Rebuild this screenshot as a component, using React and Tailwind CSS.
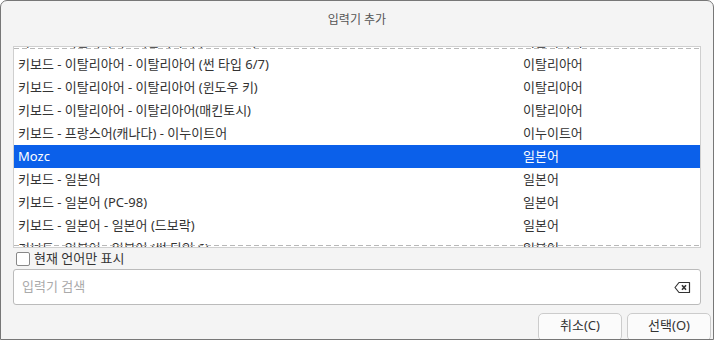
const rows = [
  ['키보드 - 이탈리아어 - 이탈리아어 (IBM 142)', '이탈리아어'],
  ['키보드 - 이탈리아어 - 이탈리아어 (썬 타입 6/7)', '이탈리아어'],
  ['키보드 - 이탈리아어 - 이탈리아어 (윈도우 키)', '이탈리아어'],
  ['키보드 - 이탈리아어 - 이탈리아어(매킨토시)', '이탈리아어'],
  ['키보드 - 프랑스어(캐나다) - 이누이트어', '이누이트어'],
  ['Mozc', '일본어'],
  ['키보드 - 일본어', '일본어'],
  ['키보드 - 일본어 (PC-98)', '일본어'],
  ['키보드 - 일본어 - 일본어 (드보락)', '일본어'],
  ['키보드 - 일본어 - 일본어 (썬 타입 6)', '일본어'],
]

function ClearIcon() {
  return (
    <svg width="17" height="13" viewBox="0 0 17 13" fill="none">
      <path d="M5 1.5 H15.5 V11.5 H5 L1 6.5 Z" stroke="#333" strokeWidth="1.2" strokeLinejoin="round" />
      <path d="M8 4.2 L12 8.8 M12 4.2 L8 8.8" stroke="#333" strokeWidth="1.6" />
    </svg>
  )
}

export default function App() {
  return (
    <div
      className="w-[714px] h-[340px] bg-[#f4f4f4] border border-[#777] rounded-t-[7px] overflow-hidden flex flex-col text-[13px] text-[#333]"
      style={{ fontFamily: '"Noto Sans", "Noto Sans CJK KR", sans-serif' }}
    >
      <div className="shrink-0 h-[36px] pt-[2px] flex items-center justify-center text-[12px] text-[#555]">입력기 추가</div>

      <div className="shrink-0 px-3 mt-[9px]">
        <div className="relative h-[202px] border border-[#cfcfcf] bg-white overflow-hidden">
          <div className="mt-[-17px]">
            {rows.map(([name, lang], i) => (
              <div
                key={i}
                className={
                  'grid grid-cols-[505px_1fr] h-[23px] items-center pl-1 whitespace-nowrap ' +
                  (name === 'Mozc' ? 'bg-[#0b60ea] text-white' : '')
                }
              >
                <span>{name}</span>
                <span>{lang}</span>
              </div>
            ))}
          </div>
          <div className="absolute left-0 right-0 top-[1px] h-px bg-[repeating-linear-gradient(to_right,#b8b8b8_0_5px,transparent_5px_8px)]" />
          <div className="absolute left-0 right-0 bottom-[1px] h-px bg-[repeating-linear-gradient(to_right,#b8b8b8_0_5px,transparent_5px_8px)]" />
        </div>

        <label className="h-[21px] flex items-center gap-[4px] pl-[3px]">
          <span className="w-[14px] h-[14px] border border-[#888] rounded-[2px] bg-white" />
          <span>현재 언어만 표시</span>
        </label>

        <div className="h-[36px] border border-[#bbb] rounded-[3px] bg-white flex items-center pl-2 pr-[9px]">
          <span className="flex-1 text-[#aaa]">입력기 검색</span>
          <ClearIcon />
        </div>
      </div>

      <div className="shrink-0 mt-[8px] flex justify-end gap-[5px] pr-[2px]">
        <button className="w-[84px] h-[28px] bg-[#fbfbfb] border border-[#ccc] rounded-[5px] pb-[2px]">취소(C)</button>
        <button className="w-[84px] h-[28px] bg-[#fbfbfb] border border-[#ccc] rounded-[5px] pb-[2px]">선택(O)</button>
      </div>
    </div>
  )
}
